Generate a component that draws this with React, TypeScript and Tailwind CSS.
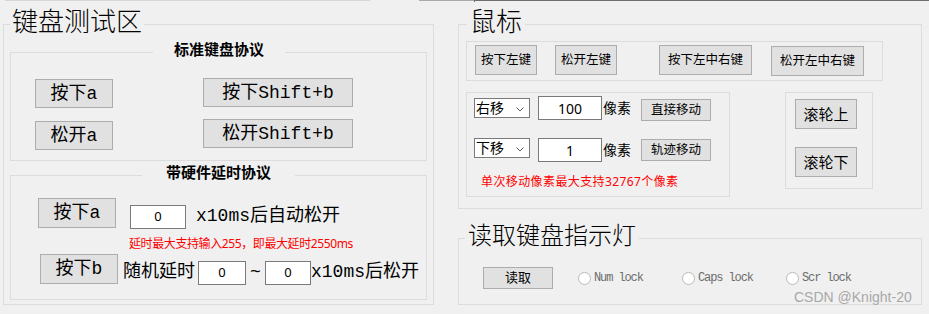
import type { ReactNode } from "react";

const song = "font-['Liberation_Mono','Noto_Sans_CJK_SC',monospace]";
const hei = "font-['Noto_Sans','Noto_Sans_CJK_SC',sans-serif]";

function Btn({ className, children }: { className: string; children: ReactNode }) {
  return (
    <div
      className={`flex items-center justify-center border border-[#adadad] bg-[#e1e1e1] text-black shrink-0 ${className}`}
    >
      {children}
    </div>
  );
}

function Input({ className, value }: { className: string; value: string }) {
  return (
    <div
      className={`flex items-center justify-center border border-[#7a7a7a] bg-white text-black shrink-0 ${hei} ${className}`}
    >
      {value}
    </div>
  );
}

function Combo({ className, value }: { className: string; value: string }) {
  return (
    <div
      className={`flex items-center justify-between pl-[1px] pr-[5px] border border-[#7a7a7a] bg-white text-black text-[14px] leading-[18px] shrink-0 ${hei} ${className}`}
    >
      <span>{value}</span>
      <svg width="8" height="5" viewBox="0 0 8 5" className="mt-[2px]">
        <polyline points="0.5,0.5 4,4 7.5,0.5" fill="none" stroke="#606060" strokeWidth="1" />
      </svg>
    </div>
  );
}

function Radio({ label }: { label: string }) {
  return (
    <div className="flex items-center w-[104px] shrink-0">
      <div className="w-[13px] h-[13px] rounded-full border border-[#b9b9b9] bg-white" />
      <span className={`ml-[3px] text-[12px] leading-[14px] tracking-[-1.1px] text-[#6d6d6d] ${song}`}>
        {label}
      </span>
    </div>
  );
}

export default function App() {
  return (
    <div className={`relative w-[929px] h-[314px] overflow-hidden bg-[#f0f0f0] ${song}`}>
      {/* remnants of the controls above */}
      <div className="flex h-[2px]">
        <div className="ml-[5px] w-[365px] h-px bg-[#d6d6d6]" />
        <div className="ml-[49px] w-[55px] h-px bg-[#a9a9a9]" />
        <div className="w-[455px] h-[2px] border-l border-t border-[#6e6e6e]" />
      </div>

      <div className="flex mt-[8px]">
        {/* keyboard */}
        <fieldset className="ml-[3px] w-[431px] h-[295px] border border-[#dcdcdc] shrink-0">
          <legend className="ml-[6px] px-[2px] text-[26px] leading-[28px] font-light text-black">键盘测试区</legend>

          <fieldset className="ml-[6px] mt-[5px] w-[417px] h-[118px] border border-[#dcdcdc]">
            <legend className="ml-[142px] px-[21px] text-[15px] leading-[18px] font-bold text-black">
              标准键盘协议
            </legend>
            <div className="flex text-[18px] leading-[22px]">
              <div className="flex flex-col ml-[24px] mt-[18px] gap-[13px]">
                <Btn className="w-[78px] h-[29px]">按下a</Btn>
                <Btn className="w-[78px] h-[29px]">松开a</Btn>
              </div>
              <div className="flex flex-col ml-[90px] mt-[17px] gap-[12px]">
                <Btn className="w-[150px] h-[29px]">按下Shift+b</Btn>
                <Btn className="w-[150px] h-[29px]">松开Shift+b</Btn>
              </div>
            </div>
          </fieldset>

          <fieldset className="ml-[6px] mt-[5px] w-[417px] h-[134px] border border-[#dcdcdc]">
            <legend className="ml-[131px] px-[24px] text-[15px] leading-[18px] font-bold text-black">
              带硬件延时协议
            </legend>
            <div className="flex items-start mt-[14px] text-[18px]">
              <Btn className="ml-[27px] w-[78px] h-[30px] leading-[22px]">按下a</Btn>
              <Input className="ml-[14px] mt-[7px] w-[56px] h-[24px] text-[13px]" value="0" />
              <span className="ml-[10px] mt-[6px] leading-[24px] text-black">x10ms后自动松开</span>
            </div>
            <div className={`ml-[118px] mt-[8px] text-[12px] leading-[14px] tracking-[-0.4px] text-[#ff0000] ${hei}`}>
              延时最大支持输入255，即最大延时2550ms
            </div>
            <div className="flex items-start mt-[3px] text-[18px]">
              <Btn className="ml-[29px] w-[78px] h-[30px] leading-[22px]">按下b</Btn>
              <span className="ml-[5px] mt-[6px] leading-[24px] text-black">随机延时</span>
              <Input className="ml-[3px] mt-[7px] w-[48px] h-[24px] text-[13px]" value="0" />
              <span className="w-[19px] mt-[6px] leading-[24px] text-center text-black">~</span>
              <Input className="mt-[7px] w-[46px] h-[24px] text-[13px]" value="0" />
              <span className="mt-[6px] leading-[24px] text-black">x10ms后松开</span>
            </div>
          </fieldset>
        </fieldset>

        <div className="flex flex-col ml-[24px] w-[464px] shrink-0">
          {/* mouse */}
          <fieldset className="w-[464px] h-[199px] border border-[#dcdcdc]">
            <legend className="ml-[8px] px-[3px] text-[26px] leading-[28px] font-light text-black">鼠标</legend>

            <div className={`flex items-start ml-[7px] mt-[3px] w-[417px] h-[40px] pt-[3px] border border-[#dcdcdc] text-[12.5px] ${hei}`}>
              <Btn className="ml-[8px] w-[62px] h-[30px]">按下左键</Btn>
              <Btn className="ml-[18px] w-[62px] h-[30px]">松开左键</Btn>
              <Btn className="ml-[42px] w-[93px] h-[30px]">按下左中右键</Btn>
              <Btn className="ml-[19px] mt-[1px] w-[93px] h-[30px]">松开左中右键</Btn>
            </div>

            <div className="flex items-start mt-[11px]">
              <div className={`ml-[7px] w-[264px] h-[105px] border border-[#dcdcdc] ${hei}`}>
                <div className="flex items-start">
                  <Combo className="ml-[7px] mt-[5px] w-[56px] h-[20px]" value="右移" />
                  <Input className="ml-[8px] mt-[3px] w-[64px] h-[24px] text-[14px]" value="100" />
                  <span className="ml-[1px] mt-[5px] w-[38px] text-[14px] leading-[20px] text-black">像素</span>
                  <Btn className="mt-[6px] w-[70px] h-[22px] text-[12.5px]">直接移动</Btn>
                </div>
                <div className="flex items-start mt-[17px]">
                  <Combo className="ml-[7px] w-[56px] h-[20px]" value="下移" />
                  <Input className="ml-[8px] w-[64px] h-[24px] text-[14px]" value="1" />
                  <span className="ml-[1px] mt-[2px] w-[38px] text-[14px] leading-[20px] text-black">像素</span>
                  <Btn className="mt-[1px] w-[70px] h-[22px] text-[12.5px]">轨迹移动</Btn>
                </div>
                <div className="ml-[14px] mt-[13px] text-[12px] leading-[14px] tracking-[0.4px] text-[#ff0000]">
                  单次移动像素最大支持32767个像素
                </div>
              </div>

              <div className={`flex flex-col ml-[55px] w-[88px] h-[97px] border border-[#dcdcdc] text-[15px] ${hei}`}>
                <Btn className="ml-[9px] mt-[6px] w-[62px] h-[30px]">滚轮上</Btn>
                <Btn className="ml-[9px] mt-[18px] w-[62px] h-[30px]">滚轮下</Btn>
              </div>
            </div>
          </fieldset>

          {/* keyboard lights */}
          <fieldset className="mt-[16px] w-[464px] h-[80px] border border-[#dcdcdc]">
            <legend className="ml-[6px] px-[3px] text-[24px] leading-[26px] font-light text-black">读取键盘指示灯</legend>
            <div className="flex items-center mt-[16px]">
              <Btn className={`ml-[24px] w-[70px] h-[22px] text-[13px] ${hei}`}>读取</Btn>
              <div className="flex ml-[25px]">
                <Radio label="Num lock" />
                <Radio label="Caps lock" />
                <Radio label="Scr lock" />
              </div>
            </div>
          </fieldset>
        </div>
      </div>

      <div className="absolute left-[794px] top-[288px] text-[14px] leading-[18px] text-[#a8a8a8] font-['Liberation_Sans',sans-serif]">
        CSDN @Knight-20
      </div>
    </div>
  );
}
